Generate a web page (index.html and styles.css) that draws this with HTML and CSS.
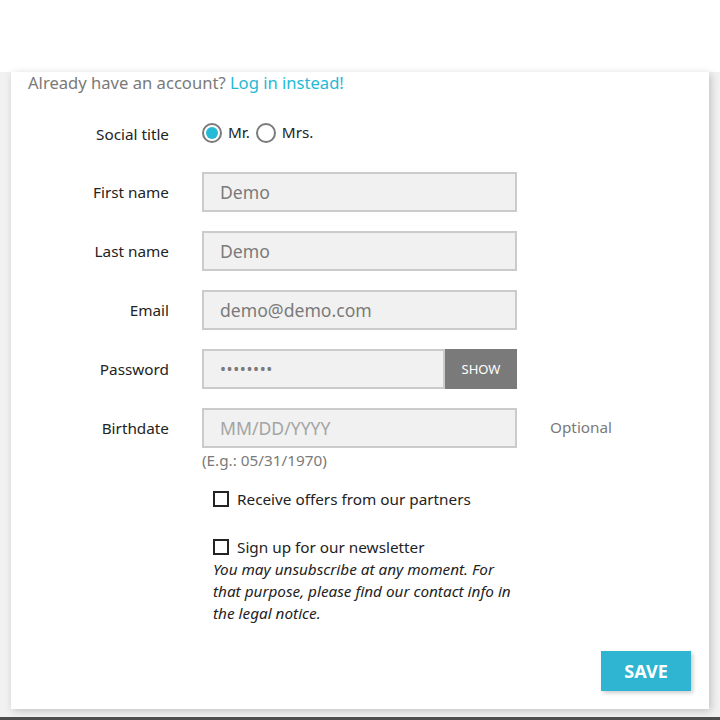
FILE: index.html
```html
<!DOCTYPE html>
<html lang="en">
<head>
<meta charset="utf-8">
<title>Create an account</title>
<link rel="stylesheet" href="styles.css">
</head>
<body>
<header class="top"></header>
<main class="page">
  <section class="card">
    <p class="login-hint">Already have an account? <a href="#" class="link">Log in instead!</a></p>
    <form class="form">
      <div class="row row-social">
        <span class="lbl">Social title</span>
        <div class="radios">
          <label class="radio-opt"><span class="radio radio-on"></span>Mr.</label>
          <label class="radio-opt"><span class="radio"></span>Mrs.</label>
        </div>
      </div>
      <div class="row">
        <span class="lbl">First name</span>
        <div class="field">Demo</div>
      </div>
      <div class="row">
        <span class="lbl">Last name</span>
        <div class="field">Demo</div>
      </div>
      <div class="row">
        <span class="lbl">Email</span>
        <div class="field">demo@demo.com</div>
      </div>
      <div class="row">
        <span class="lbl">Password</span>
        <div class="group">
          <div class="field field-pw">&bull;&bull;&bull;&bull;&bull;&bull;&bull;&bull;</div>
          <button type="button" class="show-btn">SHOW</button>
        </div>
      </div>
      <div class="row row-birth">
        <span class="lbl">Birthdate</span>
        <div class="field-wrap">
          <div class="field field-ph">MM/DD/YYYY</div>
          <div class="help">(E.g.: 05/31/1970)</div>
        </div>
        <span class="optional">Optional</span>
      </div>
      <div class="checks">
        <label class="check check-first"><span class="box"></span>Receive offers from our partners</label>
        <label class="check check-second"><span class="box"></span>Sign up for our newsletter</label>
        <p class="note">You may unsubscribe at any moment. For that purpose, please find our contact info in the legal notice.</p>
      </div>
      <div class="actions">
        <button type="button" class="save">SAVE</button>
      </div>
    </form>
  </section>
</main>
<div class="bottom-line"></div>
</body>
</html>
```
FILE: styles.css
```css
* { box-sizing: border-box; }
html, body { margin: 0; padding: 0; }
body {
  font-family: "Noto Sans", "Open Sans", sans-serif;
  color: #232323;
  background: #f1f1f1;
  width: 720px;
  height: 720px;
  overflow: hidden;
}
.top { height: 72px; background: #fff; }
.page { padding: 0 11px 8px; background: #f1f1f1; }
.card {
  background: #fff;
  height: 637px;
  padding: 0 18px 18px 17px;
  box-shadow: 2px 2px 8px 0 rgba(0,0,0,0.2);
  display: flex;
  flex-direction: column;
}
.login-hint {
  margin: 0;
  font-size: 16.6px;
  line-height: 22px;
  color: #7a7a7a;
}
.link { color: #24b9d7; text-decoration: none; }
.form { display: flex; flex-direction: column; }
.row {
  display: grid;
  grid-template-columns: 141px 315px auto;
  column-gap: 33px;
  align-items: start;
  margin-top: 19px;
}
.row-social { margin-top: 29px; margin-bottom: 8px; }
.lbl {
  text-align: right;
  font-size: 15.3px;
  line-height: 40px;
  color: #232323;
}
.row-social .lbl { line-height: 22px; }
.radios { display: flex; align-items: center; height: 20px; }
.radio-opt {
  display: flex;
  align-items: center;
  font-size: 15.3px;
  line-height: 20px;
  margin-right: 6px;
  margin-top: -3px;
}
.radio {
  width: 20px;
  height: 20px;
  border: 2px solid #7a7a7a;
  border-radius: 50%;
  margin-right: 6px;
  margin-top: 3px;
  display: inline-block;
  position: relative;
}
.radio-on::after {
  content: "";
  position: absolute;
  left: 2px; top: 2px;
  width: 12px; height: 12px;
  border-radius: 50%;
  background: #24b9d7;
}
.field {
  height: 40px;
  border: 2px solid #cbcbcb;
  background: #f1f1f1;
  padding: 0 16px;
  font-size: 17.6px;
  line-height: 36px;
  color: #7a7a7a;
}
.group { display: flex; height: 40px; }
.field-pw { flex: 1; font-size: 16px; letter-spacing: 0.6px; }
.show-btn {
  width: 72px;
  height: 40px;
  border: 0;
  background: #7a7a7a;
  color: #fff;
  font-family: inherit;
  font-size: 13px;
  padding: 0;
}
.field-ph { color: #a4a4a4; }
.help {
  margin-top: 2px;
  font-size: 15.3px;
  line-height: 20px;
  color: #7a7a7a;
}
.optional {
  font-size: 15.3px;
  line-height: 38px;
  color: #7a7a7a;
}
.checks { padding-left: 185px; display: flex; flex-direction: column; }
.check {
  display: flex;
  align-items: center;
  font-size: 15.3px;
  line-height: 22px;
}
.check-first { margin-top: 18px; }
.check-second { margin-top: 26px; }
.box {
  width: 16px;
  height: 16px;
  border: 2px solid #232323;
  margin-right: 8px;
  flex: none;
}
.note {
  margin: 0;
  width: 310px;
  font-size: 15.3px;
  line-height: 22px;
  font-style: italic;
}
.actions { display: flex; justify-content: flex-end; margin-top: 27px; }
.save {
  width: 90px;
  height: 40px;
  border: 0;
  background: #2fb5d2;
  color: #fff;
  font-family: inherit;
  font-weight: 700;
  font-size: 18px;
  padding: 0;
  box-shadow: 2px 2px 4px 0 rgba(0,0,0,0.2);
}
.bottom-line { height: 3px; background: #4d4d4d; }
```
